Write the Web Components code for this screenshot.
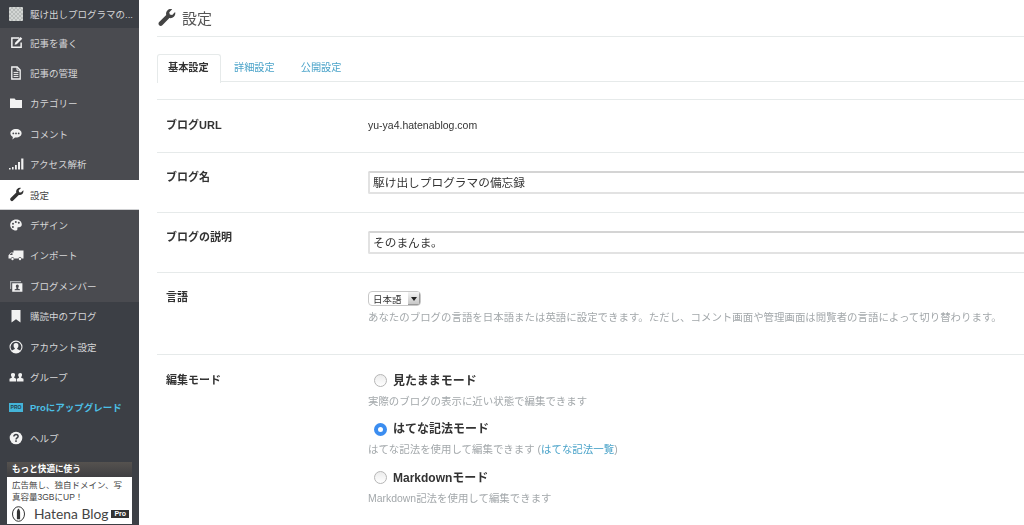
<!DOCTYPE html>
<html lang="ja">
<head>
<meta charset="utf-8">
<title>設定</title>
<style>
  html, body { margin: 0; height: 100%; overflow: hidden; background: #fff; }
  body { font-family: "Liberation Sans", "Noto Sans CJK JP", sans-serif; }
  svg { display: block; }
</style>
</head>
<body>
<blog-admin>
  <admin-sidebar slot="side">
    <nav-item slot="top" kind="blog" label="駆け出しプログラマの..."><span slot="icon" style="display:block;width:14px;height:14px;border-radius:1px;background:repeating-conic-gradient(#b9bdbb 0 25%,#d3d6d4 0 50%) 0 0/4px 4px"></span></nav-item>

    <nav-item slot="top" label="記事を書く"><svg slot="icon" width="13" height="13" viewBox="0 0 14 14"><path d="M10 2.200H2v10h10V7" fill="none" stroke="currentColor" stroke-width="1.600"/><path d="M5.500 7.200 11.400 1.200l1.800 1.800-5.900 6-2.300.5z" fill="currentColor"/></svg></nav-item>
    <nav-item slot="top" label="記事の管理"><svg slot="icon" width="14" height="14" viewBox="0 0 14 14"><path d="M2.800 1h5.400l3 3v9H2.800z" fill="none" stroke="currentColor" stroke-width="1.300"/><path d="M8 1v3.200h3M4.600 6.400h4.800M4.600 8.400h4.800M4.600 10.400h4.800" fill="none" stroke="currentColor"/></svg></nav-item>
    <nav-item slot="top" label="カテゴリー"><svg slot="icon" width="14" height="14" viewBox="0 0 14 14"><path d="M1 2.400h4.600l1.200 1.500H13v8H1z" fill="currentColor"/></svg></nav-item>
    <nav-item slot="top" label="コメント"><svg slot="icon" width="14" height="14" viewBox="0 0 14 14"><path fill-rule="evenodd" d="M7 2c3.300 0 5.600 1.900 5.600 4.300S10.300 10.600 7 10.600l-1 0-2.600 2 .5-2.600C2.400 9.300 1.400 8 1.400 6.300 1.400 3.900 3.700 2 7 2zM4.300 5.500a.9.9 0 1 0 0 1.800.9.9 0 0 0 0-1.800zM7 5.500a.9.9 0 1 0 0 1.800.9.9 0 0 0 0-1.800zM9.700 5.500a.9.9 0 1 0 0 1.800.9.9 0 0 0 0-1.800z" fill="currentColor"/></svg></nav-item>
    <nav-item slot="top" label="アクセス解析"><svg slot="icon" width="15" height="14" viewBox="0 0 15 14"><path d="M0 11h1.600v1.600H0zM3 10h1.600v2.600H3zM6 8h1.800v4.600H6zM9 5h2v7.600H9zM12.200 1.500h2.200v11.100h-2.200z" fill="currentColor"/></svg></nav-item>
    <nav-item slot="top" label="設定" active><svg slot="icon" width="15" height="15" viewBox="0 0 15 15"><path d="M14.300 3.200c.4 1.400 0 2.800-1 3.800-1 .9-2.300 1.200-3.500.9l-5.600 5.700c-.7.700-1.800.7-2.500 0s-.7-1.800 0-2.500L7.300 5.500c-.4-1.200-.1-2.600.9-3.600 1-1 2.500-1.300 3.800-.9L9.700 3.300l.4 1.900 1.900.4z" fill="currentColor"/></svg></nav-item>
    <nav-item slot="top" label="デザイン"><svg slot="icon" width="14" height="14" viewBox="0 0 14 14"><path fill-rule="evenodd" d="M7 1.500c3.300 0 5.800 2.100 5.800 4.900 0 1.900-1.500 2.900-3 2.800-1.100 0-1.700.5-1.400 1.400.3 1.100-.3 2-1.500 1.900C3.900 12.300 1.200 10 1.200 6.900 1.200 3.900 3.700 1.500 7 1.500zM4 4.700a1 1 0 1 0 0 2 1 1 0 0 0 0-2zM6.800 3a1 1 0 1 0 0 2 1 1 0 0 0 0-2zM9.800 3.800a1 1 0 1 0 0 2 1 1 0 0 0 0-2zM3.900 8a1 1 0 1 0 0 2 1 1 0 0 0 0-2z" fill="currentColor"/></svg></nav-item>
    <nav-item slot="top" label="インポート"><svg slot="icon" width="16" height="14" viewBox="0 0 16 14"><path d="M5.500 2.500H15.500v8h-2a1.500 1.500 0 0 0-3 0H6a1.500 1.500 0 0 0-3 0H.5V7.300L3 4.500h2.500zM1.700 7h2.800V5.300H3.200z" fill="currentColor" fill-rule="evenodd"/><circle cx="4.500" cy="11" r="1.200" fill="currentColor"/><circle cx="12" cy="11" r="1.200" fill="currentColor"/></svg></nav-item>
    <nav-item slot="top" label="ブログメンバー"><svg slot="icon" width="14" height="14" viewBox="0 0 14 14"><path d="M1 2h11v1.200H2.200V10H1z" fill="#a9abae"/><path fill-rule="evenodd" d="M3.200 4.200H13.400V12.800H3.200zM8.300 5.600a1.500 1.500 0 0 0-1.500 1.700c0 .8.400 1.400.8 1.700v.6l-2 .8v.9h5.400v-.9l-2-.8V9c.4-.3.800-.9.800-1.700a1.500 1.500 0 0 0-1.500-1.700z" fill="currentColor"/></svg></nav-item>

    <nav-item slot="bottom" label="購読中のブログ"><svg slot="icon" width="14" height="14" viewBox="0 0 14 14"><path d="M2.500 1h9v12.500L7 10.300 2.500 13.500z" fill="currentColor"/></svg></nav-item>
    <nav-item slot="bottom" label="アカウント設定"><svg slot="icon" width="14" height="14" viewBox="0 0 14 14"><path fill-rule="evenodd" d="M7 .5a6.500 6.500 0 1 1 0 13 6.500 6.500 0 0 1 0-13zM7 1.700a5.300 5.300 0 0 0-4.100 8.700l2.900-1.300v-.9c-.7-.5-1.200-1.400-1.200-2.500A2.400 2.400 0 0 1 7 3.100a2.400 2.400 0 0 1 2.400 2.600c0 1.100-.5 2-1.200 2.500v.9l2.900 1.300A5.300 5.300 0 0 0 7 1.700z" fill="currentColor"/></svg></nav-item>
    <nav-item slot="bottom" label="グループ"><svg slot="icon" width="15" height="14" viewBox="0 0 15 14"><path d="M4 3a2 2 0 0 1 2 2.300c0 .8-.4 1.500-.8 1.800v.7l2 1V11.500H.5V8.800l2.300-1v-.7C2.400 6.800 2 6.100 2 5.300A2 2 0 0 1 4 3zM11 3a2 2 0 0 1 2 2.300c0 .8-.4 1.500-.8 1.800v.7l2.300 1v2.700H8V8.800l2-1v-.7c-.4-.3-.8-1-.8-1.800A2 2 0 0 1 11 3z" fill="currentColor"/></svg></nav-item>
    <nav-item slot="bottom" label="Proにアップグレード" kind="pro"><span slot="icon" style="display:block;width:14px;height:9px;background:#44b4d8;color:#23404c;font:bold 5px/9px 'Liberation Sans',sans-serif;text-align:center">PRO</span></nav-item>
    <nav-item slot="bottom" label="ヘルプ"><svg slot="icon" width="14" height="14" viewBox="0 0 14 14"><circle cx="7" cy="7" r="6.300" fill="currentColor"/><path d="M4.900 5.400c0-1.200 1-1.800 2.100-1.800 1.200 0 2.100.7 2.100 1.800 0 1.500-2 1.500-2 3" fill="none" stroke="#3c3f45" stroke-width="1.500"/><rect x="6.200" y="9.300" width="1.600" height="1.600" fill="#3c3f45"/></svg></nav-item>

    <promo-box slot="promo"></promo-box>
  </admin-sidebar>

  <settings-page slot="main">
    <setting-row label="ブログURL" style="--pad:19px 0 20px"><span style="font-size:10.500px;line-height:13px;color:#333;display:block">yu-ya4.hatenablog.com</span></setting-row>
    <setting-row label="ブログ名"><text-field>駆け出しプログラマの備忘録</text-field></setting-row>
    <setting-row label="ブログの説明"><text-field>そのまんま。</text-field></setting-row>
    <setting-row label="言語" style="--pad:18px 0 29px">
      <select-box>日本語</select-box>
      <help-text>あなたのブログの言語を日本語または英語に設定できます。ただし、コメント画面や管理画面は閲覧者の言語によって切り替わります。</help-text>
    </setting-row>
    <setting-row label="編集モード" style="--pad:17px 0 0;--border:none;--label-top:2px">
      <radio-option label="見たままモード">実際のブログの表示に近い状態で編集できます</radio-option>
      <radio-option label="はてな記法モード" checked>はてな記法を使用して編集できます (<a style="color:#4aa3c9;text-decoration:none">はてな記法一覧</a>)</radio-option>
      <radio-option label="Markdownモード">Markdown記法を使用して編集できます</radio-option>
    </setting-row>
  </settings-page>
</blog-admin>

<script>
const FONT = `"Liberation Sans", "Noto Sans CJK JP", sans-serif`;

class ShadowBase extends HTMLElement {
  connectedCallback() {
    if (this.shadowRoot) {
      return;
    }
    const root = this.attachShadow({ mode: "open" });
    root.innerHTML = this.render();
  }
  attr(name) {
    return this.getAttribute(name) || "";
  }
}

class BlogAdmin extends ShadowBase {
  render() {
    return `
      <style>
        :host { display: flex; height: 525px; width: 1024px; overflow: hidden; font-family: ${FONT}; filter: blur(.3px); }
        .side { flex: 0 0 139px; display: block; }
        .main { flex: 1; min-width: 0; }
      </style>
      <div class="side"><slot name="side"></slot></div>
      <div class="main"><slot name="main"></slot></div>
    `;
  }
}

class AdminSidebar extends ShadowBase {
  render() {
    return `
      <style>
        :host { display: flex; flex-direction: column; height: 525px; background: #3c3f45; }
        .top { background: #4a4b50; display: flex; flex-direction: column; }
        .bottom { display: flex; flex-direction: column; }
        .promo { margin-top: 9px; padding: 0 7px; }
      </style>
      <div class="top"><slot name="top"></slot></div>
      <div class="bottom"><slot name="bottom"></slot></div>
      <div class="promo"><slot name="promo"></slot></div>
    `;
  }
}

class NavItem extends ShadowBase {
  render() {
    return `
      <style>
        :host { display: flex; align-items: center; height: 30.4px; box-sizing: border-box; padding: 0 0 1px 8px; color: #f2f2f2; font-size: 9.500px; }
        :host([kind="blog"]) { height: 28px; background: #3c3f45; }
        :host([active]) { background: #fff; color: #333; box-shadow: inset 0 -1px 0 #cfd0d2; }
        :host([kind="pro"]) { font-weight: bold; }
        .icon { flex: 0 0 16px; height: 16px; display: flex; align-items: center; justify-content: center; margin-right: 6px; }
        .label { color: #d6d6d8; white-space: nowrap; }
        :host([active]) .label { color: #444; }
        :host([kind="pro"]) .label { color: #4cc0e6; }
      </style>
      <span class="icon"><slot name="icon"></slot></span>
      <span class="label">${this.attr("label")}</span>
    `;
  }
}

class PromoBox extends ShadowBase {
  render() {
    return `
      <style>
        :host { display: block; width: 125px; }
        .head { height: 15px; line-height: 15px; padding-left: 5px; color: #fff; font-size: 8.600px; font-weight: bold; background: linear-gradient(#55524f, #3f3f42); }
        .body { background: #fff; height: 47px; padding: 3px 4px 0 5px; box-sizing: border-box; overflow: hidden; color: #444; font-size: 8.500px; line-height: 11.500px; }
        .logo { display: flex; align-items: center; margin-top: 2px; margin-right: -4px; color: #444; font: 400 13.800px/18px Lato, ${FONT}; white-space: nowrap; }
        .logo svg { flex: none; margin-right: 9px; }
        .pro { background: #333; color: #fff; font: bold 7px/8px ${FONT}; padding: 0 3px; margin-left: 3px; }
      </style>
      <div class="head">もっと快適に使う</div>
      <div class="body">
        広告無し、独自ドメイン、写真容量3GBにUP！
        <div class="logo">
          <svg width="13" height="16" viewBox="0 0 13 16" style="display:block"><ellipse cx="6.500" cy="8" rx="6" ry="7.300" fill="none" stroke="#333"/><path d="M6.500 2.500c1 1.200 1.600 2.200 1.600 3.800v7H4.900v-7c0-1.600.6-2.600 1.600-3.800z" fill="#333"/></svg>
          <span>Hatena Blog</span><span class="pro">Pro</span>
        </div>
      </div>
    `;
  }
}

class SettingsPage extends ShadowBase {
  render() {
    return `
      <style>
        :host { display: block; padding-left: 18px; color: #333; }
        h1 { margin: 0; height: 37px; box-sizing: border-box; display: flex; align-items: center; gap: 6px; border-bottom: 1px solid #e6eaea; font-size: 15px; font-weight: normal; color: #555; padding-bottom: 1px; }
        .tabs { display: flex; margin-top: 17px; height: 28px; box-sizing: border-box; border-bottom: 1px solid #e6eaea; font-size: 10.200px; }
        .tab { padding: 0 12px; line-height: 25px; color: #4aa3c9; margin-bottom: -1px; border: 1px solid transparent; border-bottom: 0; }
        .tab.on { color: #333; font-weight: bold; background: #fff; border-color: #e6eaea; border-radius: 3px 3px 0 0; width: 41px; padding: 0 11px 0 10px; height: 28px; box-sizing: content-box; white-space: nowrap; }
        .rows { margin-top: 17px; border-top: 1px solid #e6eaea; }
      </style>
      <h1>
        <svg width="19" height="19" viewBox="0 0 15 15" style="display:block"><path d="M14.300 3.200c.4 1.400 0 2.800-1 3.800-1 .9-2.300 1.200-3.500.9l-5.600 5.700c-.7.700-1.800.7-2.500 0s-.7-1.800 0-2.500L7.300 5.500c-.4-1.200-.1-2.600.9-3.600 1-1 2.500-1.300 3.800-.9L9.700 3.300l.4 1.900 1.900.4z" fill="#444"/></svg>
        設定
      </h1>
      <div class="tabs">
        <span class="tab on">基本設定</span>
        <span class="tab">詳細設定</span>
        <span class="tab">公開設定</span>
      </div>
      <div class="rows"><slot></slot></div>
    `;
  }
}

class SettingRow extends ShadowBase {
  render() {
    return `
      <style>
        :host { display: grid; grid-template-columns: 211px 1fr; padding: var(--pad, 18px 0); border-bottom: var(--border, 1px solid #e6eaea); }
        .label { padding: var(--label-top, 0) 0 0 9px; font-size: 11px; font-weight: bold; color: #333; line-height: 13px; }
        .value { min-width: 0; }
      </style>
      <div class="label">${this.attr("label")}</div>
      <div class="value"><slot></slot></div>
    `;
  }
}

class TextField extends ShadowBase {
  render() {
    return `
      <style>
        :host { display: block; width: 700px; height: 23px; box-sizing: border-box; border: 2px solid #e2e2e2; border-top-color: #d4d4d4; border-radius: 2px; padding-left: 3px; font-size: 11.700px; line-height: 19px; color: #333; background: #fff; }
      </style>
      <slot></slot>
    `;
  }
}

class SelectBox extends ShadowBase {
  render() {
    return `
      <style>
        :host { display: flex; align-items: center; width: 53px; height: 15px; box-sizing: border-box; border: 1px solid #c8c8c8; border-radius: 4px; padding-left: 4px; font-size: 9.500px; color: #333; background: #fff; overflow: hidden; }
        .txt { flex: 1; }
        .arrow { flex: 0 0 12px; height: 13px; background: linear-gradient(#f4f4f4, #c4c4c4); box-shadow: inset -1px -1px 0 #999; display: flex; align-items: center; justify-content: center; }
        .arrow i { width: 0; height: 0; border: 3px solid transparent; border-top: 4px solid #222; border-bottom: 0; }
      </style>
      <span class="txt"><slot></slot></span>
      <span class="arrow"><i></i></span>
    `;
  }
}

class HelpText extends ShadowBase {
  render() {
    return `
      <style>
        :host { display: block; margin-top: 5px; font-size: 10.450px; line-height: 14px; color: #a3a8ab; white-space: nowrap; }
      </style>
      <slot></slot>
    `;
  }
}

class RadioOption extends ShadowBase {
  render() {
    return `
      <style>
        :host { display: block; height: 48.500px; }
        .line { display: flex; align-items: center; height: 14px; font-size: 12px; font-weight: bold; color: #333; white-space: nowrap; }
        .dot { width: 13px; height: 13px; margin: 3px 6px 0 6px; box-sizing: border-box; border: 1px solid #b5b5b5; border-radius: 50%; background: linear-gradient(#ececec, #fff); flex: none; }
        :host([checked]) .dot { border: 4px solid #3b8df0; background: #fff; }
        .sub { margin-top: 8.500px; font-size: 10.450px; line-height: 13px; color: #a3a8ab; white-space: nowrap; }
      </style>
      <div class="line"><span class="dot"></span>${this.attr("label")}</div>
      <div class="sub"><slot></slot></div>
    `;
  }
}

customElements.define("blog-admin", BlogAdmin);
customElements.define("admin-sidebar", AdminSidebar);
customElements.define("nav-item", NavItem);
customElements.define("promo-box", PromoBox);
customElements.define("settings-page", SettingsPage);
customElements.define("setting-row", SettingRow);
customElements.define("text-field", TextField);
customElements.define("select-box", SelectBox);
customElements.define("help-text", HelpText);
customElements.define("radio-option", RadioOption);
</script>
</body>
</html>
